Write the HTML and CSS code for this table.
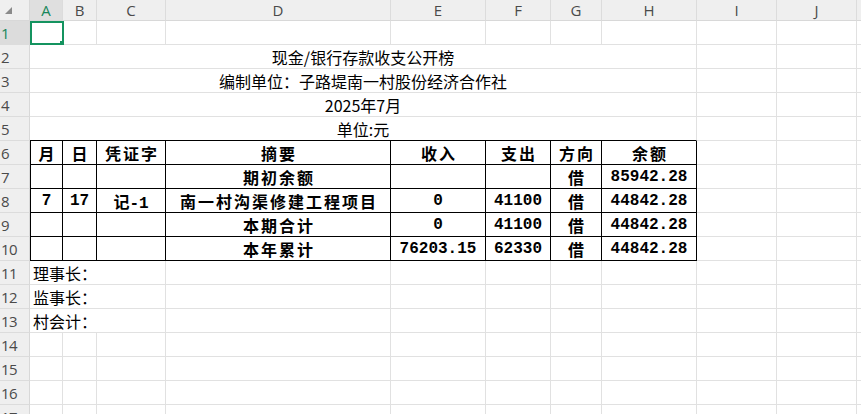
FILE: index.html
```html
<!DOCTYPE html>
<html lang="zh-CN">
<head>
<meta charset="utf-8">
<title>现金/银行存款收支公开榜</title>
<link rel="stylesheet" href="styles.css">
</head>
<body>
<div class="sheet">
  <div class="corner"><svg class="corner-tri" width="8" height="8" viewBox="0 0 8 8"><polygon points="7,0 7,7 0,7" fill="#8a8a8a"/></svg></div>
  <div class="ch sel">A</div><div class="ch">B</div><div class="ch">C</div><div class="ch">D</div><div class="ch">E</div><div class="ch">F</div><div class="ch">G</div><div class="ch">H</div><div class="ch">I</div><div class="ch">J</div><div class="ch"></div>

  <div class="rh sel">1</div><div class="c"></div><div class="c"></div><div class="c"></div><div class="c"></div><div class="c"></div><div class="c"></div><div class="c"></div><div class="c"></div><div class="c"></div><div class="c"></div><div class="c"></div>

  <div class="rh">2</div><div class="c title">现金/银行存款收支公开榜</div><div class="c"></div><div class="c"></div><div class="c"></div>
  <div class="rh">3</div><div class="c title">编制单位：子路堤南一村股份经济合作社</div><div class="c"></div><div class="c"></div><div class="c"></div>
  <div class="rh">4</div><div class="c title">2025年7月</div><div class="c"></div><div class="c"></div><div class="c"></div>
  <div class="rh">5</div><div class="c title tabletop">单位:元</div><div class="c"></div><div class="c"></div><div class="c"></div>

  <div class="rh">6</div><div class="t first cjk">月</div><div class="t cjk">日</div><div class="t cjk">凭证字</div><div class="t cjk">摘要</div><div class="t cjk">收入</div><div class="t cjk">支出</div><div class="t cjk">方向</div><div class="t cjk">余额</div><div class="c"></div><div class="c"></div><div class="c"></div>
  <div class="rh">7</div><div class="t first"></div><div class="t"></div><div class="t"></div><div class="t cjk">期初余额</div><div class="t"></div><div class="t"></div><div class="t cjk">借</div><div class="t">85942.28</div><div class="c"></div><div class="c"></div><div class="c"></div>
  <div class="rh">8</div><div class="t first">7</div><div class="t">17</div><div class="t">记-1</div><div class="t cjk">南一村沟渠修建工程项目</div><div class="t">0</div><div class="t">41100</div><div class="t cjk">借</div><div class="t">44842.28</div><div class="c"></div><div class="c"></div><div class="c"></div>
  <div class="rh">9</div><div class="t first"></div><div class="t"></div><div class="t"></div><div class="t cjk">本期合计</div><div class="t">0</div><div class="t">41100</div><div class="t cjk">借</div><div class="t">44842.28</div><div class="c"></div><div class="c"></div><div class="c"></div>
  <div class="rh">10</div><div class="t first"></div><div class="t"></div><div class="t"></div><div class="t cjk">本年累计</div><div class="t">76203.15</div><div class="t">62330</div><div class="t cjk">借</div><div class="t">44842.28</div><div class="c"></div><div class="c"></div><div class="c"></div>

  <div class="rh">11</div><div class="c sig">理事长：</div><div class="c"></div><div class="c"></div><div class="c"></div><div class="c"></div><div class="c"></div><div class="c"></div><div class="c"></div><div class="c"></div>
  <div class="rh">12</div><div class="c sig">监事长：</div><div class="c"></div><div class="c"></div><div class="c"></div><div class="c"></div><div class="c"></div><div class="c"></div><div class="c"></div><div class="c"></div>
  <div class="rh">13</div><div class="c sig">村会计：</div><div class="c"></div><div class="c"></div><div class="c"></div><div class="c"></div><div class="c"></div><div class="c"></div><div class="c"></div><div class="c"></div>

  <div class="rh">14</div><div class="c"></div><div class="c"></div><div class="c"></div><div class="c"></div><div class="c"></div><div class="c"></div><div class="c"></div><div class="c"></div><div class="c"></div><div class="c"></div><div class="c"></div>
  <div class="rh">15</div><div class="c"></div><div class="c"></div><div class="c"></div><div class="c"></div><div class="c"></div><div class="c"></div><div class="c"></div><div class="c"></div><div class="c"></div><div class="c"></div><div class="c"></div>
  <div class="rh">16</div><div class="c"></div><div class="c"></div><div class="c"></div><div class="c"></div><div class="c"></div><div class="c"></div><div class="c"></div><div class="c"></div><div class="c"></div><div class="c"></div><div class="c"></div>
  <div class="rh">17</div><div class="c"></div><div class="c"></div><div class="c"></div><div class="c"></div><div class="c"></div><div class="c"></div><div class="c"></div><div class="c"></div><div class="c"></div><div class="c"></div><div class="c"></div>

  <div class="selection"><span class="handle"></span></div>
</div>
</body>
</html>
```

FILE: styles.css
```css
html, body {
  margin: 0;
  padding: 0;
  background: #ffffff;
  overflow: hidden;
}

.sheet {
  position: relative;
  display: grid;
  grid-template-columns: 30px 33px 34px 69px 225px 95px 65px 51px 95px 80px 80px 80px;
  grid-template-rows: 21px repeat(17, 24px);
  width: 861px;
  height: 414px;
  overflow: hidden;
  font-family: "Noto Sans CJK SC", sans-serif;
  color: #000;
}

.sheet > div {
  box-sizing: border-box;
  min-width: 0;
  overflow: hidden;
  white-space: nowrap;
}

.corner {
  position: relative;
  background: #efefef;
  border-right: 1px solid #d8d8d8;
  border-bottom: 1px solid #d8d8d8;
}

.corner-tri {
  position: absolute;
  left: 5px;
  top: 7px;
}

.ch {
  background: #efefef;
  border-right: 1px solid #dcdcdc;
  border-bottom: 1px solid #d8d8d8;
  display: flex;
  align-items: center;
  justify-content: center;
  font-family: "Open Sans", "Liberation Sans", sans-serif;
  font-size: 15px;
  color: #4a4a4a;
}

.ch.sel {
  background: #dfdfdf;
  color: #17865a;
}

.rh {
  background: #efefef;
  border-right: 1px solid #d8d8d8;
  border-bottom: 1px solid #dcdcdc;
  display: flex;
  align-items: center;
  padding-left: 1px;
  font-family: "Open Sans", "Liberation Sans", sans-serif;
  font-size: 15px;
  letter-spacing: -0.5px;
  color: #4a4a4a;
}

.rh.sel {
  background: #dcdcdc;
  color: #17865a;
}

.c {
  border-right: 1px solid #e1e1e1;
  border-bottom: 1px solid #e1e1e1;
}

.title {
  grid-column: span 8;
  display: flex;
  align-items: center;
  justify-content: center;
  font-size: 16px;
  font-weight: 400;
  padding-top: 1px;
}

.title.tabletop {
  border-bottom: 1px solid #000;
}

.sig {
  grid-column: span 3;
  display: flex;
  align-items: center;
  padding-left: 3px;
  font-size: 16px;
}

.t {
  border-right: 1px solid #000;
  border-bottom: 1px solid #000;
  display: flex;
  align-items: center;
  justify-content: center;
  font-family: "Liberation Mono", "Noto Sans CJK SC", monospace;
  font-weight: 700;
  font-size: 16px;
}

.t.first {
  border-left: 1px solid #000;
}

.t.cjk {
  font-family: "Noto Sans CJK SC", sans-serif;
  letter-spacing: 2px;
  text-indent: 2px;
  font-weight: 700;
}

.selection {
  position: absolute;
  left: 30px;
  top: 21px;
  width: 34px;
  height: 24px;
  box-sizing: border-box;
  border: 2px solid #14935f;
}

.handle {
  position: absolute;
  right: -4px;
  bottom: -4px;
  width: 5px;
  height: 5px;
  background: #14935f;
  border: 1px solid #ffffff;
}
```
